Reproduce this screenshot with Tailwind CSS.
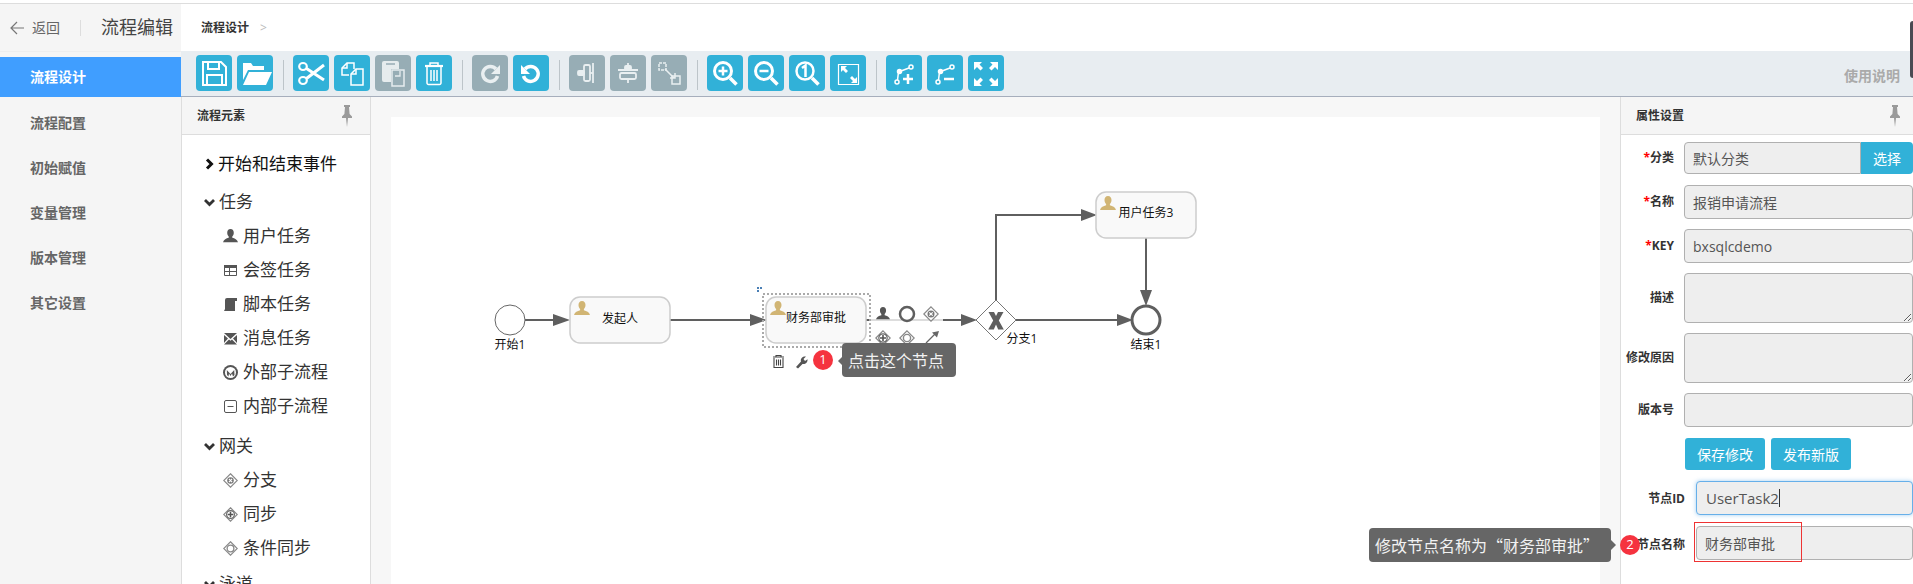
<!DOCTYPE html>
<html lang="zh">
<head>
<meta charset="utf-8">
<title>流程编辑</title>
<script src="https://cdn.jsdelivr.net/npm/@tailwindcss/browser@4"></script>
</head>
<body class="relative w-[1913px] h-[584px] overflow-hidden bg-white text-[#333] font-['Open_Sans','Noto_Sans_CJK_SC',sans-serif]">
<svg class="absolute w-0 h-0">
  <defs>
    <symbol id="pin" viewBox="0 0 12 22"><path fill="#9a9a9a" d="M3 0h6v2H8l.6 7L11 11.500V13H7l-1 9-1-9H1v-1.500L3.400 9 4 2H3z"/></symbol>
    <symbol id="person" viewBox="0 0 16 16"><path d="M8 0c2.300 0 3.500 1.700 3.500 4 0 1.700-.7 3.200-1.600 4v1.300c2.600.8 5.300 1.800 6.100 4.700H0c.8-2.900 3.500-3.900 6.100-4.700V8c-.9-.8-1.600-2.300-1.600-4C4.500 1.700 5.700 0 8 0z"/></symbol>
    <symbol id="dx" viewBox="0 0 16 16"><path d="M8 .8 15.200 8 8 15.200.8 8z" fill="#fff" stroke="#888" stroke-width="1.200"/><circle cx="8" cy="8" r="3.500" fill="#777"/><path d="m6.300 6.300 3.400 3.400m0-3.400-3.400 3.400" stroke="#fff" stroke-width="1.200"/></symbol>
    <symbol id="dp" viewBox="0 0 16 16"><path d="M8 .8 15.200 8 8 15.200.8 8z" fill="#fff" stroke="#888" stroke-width="1.200"/><circle cx="8" cy="8" r="4.200" fill="#fff" stroke="#666" stroke-width="1.200"/><path d="M8 5v6M5 8h6" stroke="#555" stroke-width="1.600"/></symbol>
    <symbol id="dr" viewBox="0 0 16 16"><path d="M8 .8 15.200 8 8 15.200.8 8z" fill="#fff" stroke="#888" stroke-width="1.200"/><circle cx="8" cy="8" r="3.600" fill="#fff" stroke="#888" stroke-width="1.400"/></symbol>
  </defs>
</svg>

<div class="h-[3px] bg-white"></div>
<div class="h-px bg-[#ddd]"></div>

<div class="flex h-[580px]">
  <!-- sidebar -->
  <aside class="w-[181px] shrink-0 bg-[#f5f5f5] flex flex-col">
    <div class="h-[48px] shrink-0 flex items-center border-b border-[#eee] pl-[10px]">
      <svg class="w-[15px] h-[14px]" viewBox="0 0 15 14" fill="none" stroke="#777" stroke-width="1.200"><path d="M14 7H1.500M7 1 1 7l6 6"/></svg>
      <span class="ml-[7px] text-[14px] text-[#666]">返回</span>
      <span class="ml-[20px] w-px h-[16px] bg-[#ddd]"></span>
      <span class="ml-[20px] text-[18px] text-[#444] whitespace-nowrap">流程编辑</span>
    </div>
    <nav class="mt-[5px] flex flex-col gap-[5px] text-[14px] font-bold text-[#666]">
      <a class="h-[40px] flex items-center pl-[30px] pb-[2px] bg-[#409eff] text-white">流程设计</a>
      <a class="h-[40px] flex items-center pl-[30px]">流程配置</a>
      <a class="h-[40px] flex items-center pl-[30px]">初始赋值</a>
      <a class="h-[40px] flex items-center pl-[30px]">变量管理</a>
      <a class="h-[40px] flex items-center pl-[30px]">版本管理</a>
      <a class="h-[40px] flex items-center pl-[30px]">其它设置</a>
    </nav>
  </aside>

  <div class="flex-1 min-w-0 flex flex-col">
    <!-- breadcrumb -->
    <div class="h-[47px] shrink-0 flex items-center pl-[20px] bg-white">
      <span class="text-[12px] font-bold text-[#333]">流程设计</span>
      <span class="ml-[11px] text-[12px] text-[#bbb]">&gt;</span>
    </div>

    <!-- toolbar -->
    <div class="h-[46px] shrink-0 bg-[#e8edf1] border-b border-[#a6aebc] flex items-start gap-[5px] pt-[4px] pl-[15px]">
      <button class="w-[36px] h-[36px] rounded-[4px] bg-[#31b1d8]"><svg viewBox="0 0 36 36" fill="none" stroke="#fff" stroke-width="2"><path d="M7 7h18l5 5v18H7zM12 7v7h11V7M11 30v-10h15v10"/></svg></button>
      <button class="w-[36px] h-[36px] rounded-[4px] bg-[#31b1d8]"><svg viewBox="0 0 36 36" fill="#fff"><path d="M6 10V8h8l2 3h11v4H11L6 25z"/><path d="M12 17h23l-6 13H6z"/></svg></button>
      <span class="ml-[5px] mr-[4px] mt-[5px] w-px h-[30px] bg-[#bcc4c9]"></span>
      <button class="w-[36px] h-[36px] rounded-[4px] bg-[#31b1d8]"><svg viewBox="0 0 36 36" fill="none" stroke="#fff" stroke-width="2.200"><ellipse cx="10" cy="11.500" rx="3.800" ry="3.500"/><ellipse cx="10" cy="25.500" rx="3.800" ry="3.500"/><path d="M13.500 13.500 31 25M13.500 23.500 31 10" stroke-width="3"/></svg></button>
      <button class="w-[36px] h-[36px] rounded-[4px] bg-[#31b1d8]"><svg viewBox="0 0 36 36" fill="none" stroke="#fff" stroke-width="1.500"><path d="M15 20H8v-7l5-5h7v6"/><path d="M13 8v5H8"/><path d="M17 19l5-5h7v16H17z"/><path d="M22 14v5h-5"/></svg></button>
      <button class="w-[36px] h-[36px] rounded-[4px] bg-[#97adb5]"><svg viewBox="0 0 36 36" fill="none"><path fill="#e6ecee" d="M7 8a2 2 0 0 1 2-2h13a2 2 0 0 1 2 2v6h-8v13H9a2 2 0 0 1-2-2z"/><path stroke="#e6ecee" stroke-width="1.500" d="M17 15h12v16H17z"/><path stroke="#97adb5" stroke-width="1.500" d="M11 9h9"/><path stroke="#e6ecee" stroke-width="1.300" d="M25 16v5h-5"/></svg></button>
      <button class="w-[36px] h-[36px] rounded-[4px] bg-[#31b1d8]"><svg viewBox="0 0 36 36" fill="none" stroke="#fff" stroke-width="1.500"><path d="M9 11h18" stroke-width="2.200"/><path d="M14 11V8h8v3M11 12v16a1.500 1.500 0 0 0 1.500 1.500h11A1.500 1.500 0 0 0 25 28V12"/><path d="M15 15v11M18 15v11M21 15v11"/></svg></button>
      <span class="ml-[5px] mr-[4px] mt-[5px] w-px h-[30px] bg-[#bcc4c9]"></span>
      <button class="w-[36px] h-[36px] rounded-[4px] bg-[#97adb5]"><svg viewBox="0 0 36 36" fill="none"><path stroke="#e9eff1" stroke-width="3.500" d="M24 14a7.500 7.500 0 1 0 1.500 7"/><path fill="#e9eff1" d="M28 10v9h-9z"/></svg></button>
      <button class="w-[36px] h-[36px] rounded-[4px] bg-[#31b1d8]"><svg viewBox="0 0 36 36" fill="none"><path stroke="#fff" stroke-width="3.500" d="M12 14a7.500 7.500 0 1 1-1.500 7"/><path fill="#fff" d="M8 10v9h9z"/></svg></button>
      <span class="ml-[5px] mr-[4px] mt-[5px] w-px h-[30px] bg-[#bcc4c9]"></span>
      <button class="w-[36px] h-[36px] rounded-[4px] bg-[#97adb5]"><svg viewBox="0 0 36 36" fill="none" stroke="#e9eff1" stroke-width="1.800"><rect x="15" y="10" width="6" height="16" rx="1.500"/><path d="M24 8v20"/><rect x="9" y="16" width="6" height="4" rx="1" fill="#e9eff1"/><path d="M21 18h3"/></svg></button>
      <button class="w-[36px] h-[36px] rounded-[4px] bg-[#97adb5]"><svg viewBox="0 0 36 36" fill="none" stroke="#e9eff1" stroke-width="1.800"><rect x="10" y="18" width="16" height="6" rx="1.500"/><rect x="15" y="11" width="6" height="4" rx="1" fill="#e9eff1"/><path d="M8 15h20M18 8v3M18 24v4"/></svg></button>
      <button class="w-[36px] h-[36px] rounded-[4px] bg-[#97adb5]"><svg viewBox="0 0 36 36" fill="none" stroke="#e9eff1" stroke-width="1.500"><path d="M8 8h7v7H8z" stroke-dasharray="3 1"/><path d="M21 21h8v8h-8z"/><path d="M14 14l9 9M24 18v5h-5"/></svg></button>
      <span class="ml-[5px] mr-[4px] mt-[5px] w-px h-[30px] bg-[#bcc4c9]"></span>
      <button class="w-[36px] h-[36px] rounded-[4px] bg-[#31b1d8]"><svg viewBox="0 0 36 36" fill="none" stroke="#fff"><circle cx="16" cy="16" r="8.500" stroke-width="3"/><path d="M23 23l6.500 6.500" stroke-width="3.500"/><path d="M16 11.500v9M11.500 16h9" stroke-width="2.500"/></svg></button>
      <button class="w-[36px] h-[36px] rounded-[4px] bg-[#31b1d8]"><svg viewBox="0 0 36 36" fill="none" stroke="#fff"><circle cx="16" cy="16" r="8.500" stroke-width="3"/><path d="M23 23l6.500 6.500" stroke-width="3.500"/><path d="M11.500 16h9" stroke-width="2.500"/></svg></button>
      <button class="w-[36px] h-[36px] rounded-[4px] bg-[#31b1d8]"><svg viewBox="0 0 36 36" fill="none" stroke="#fff"><circle cx="16" cy="16" r="8.500" stroke-width="2.500"/><path d="M23 23l6.500 6.500" stroke-width="3.500"/><path d="M13 13l3.500-2.500V22" stroke-width="2.500"/></svg></button>
      <button class="w-[36px] h-[36px] rounded-[4px] bg-[#31b1d8]"><svg viewBox="0 0 36 36" fill="none"><path stroke="#fff" stroke-width="1.200" d="M8.500 9.500h20v20h-20z"/><path fill="#fff" d="M11 11h6l-2 2 3 3-2 2-3-3-2 2zM27 28h-6l2-2-3-3 2-2 3 3 2-2z"/></svg></button>
      <span class="ml-[5px] mr-[4px] mt-[5px] w-px h-[30px] bg-[#bcc4c9]"></span>
      <button class="w-[36px] h-[36px] rounded-[4px] bg-[#31b1d8]"><svg viewBox="0 0 36 36" fill="none" stroke="#fff" stroke-width="1.500"><circle cx="25" cy="12" r="2"/><circle cx="11" cy="27" r="2"/><path d="M23 13l-8 3q-3 1-3 5l-.5 4"/><circle cx="13.500" cy="16.500" r="2" fill="#fff"/><path d="M17 24h10M22 19v10" stroke-width="2.500"/></svg></button>
      <button class="w-[36px] h-[36px] rounded-[4px] bg-[#31b1d8]"><svg viewBox="0 0 36 36" fill="none" stroke="#fff" stroke-width="1.500"><circle cx="25" cy="12" r="2"/><circle cx="11" cy="27" r="2"/><path d="M23 13l-8 3q-3 1-3 5l-.5 4"/><circle cx="13.500" cy="16.500" r="2" fill="#fff"/><path d="M17 24h10" stroke-width="2.500"/></svg></button>
      <button class="w-[36px] h-[36px] rounded-[4px] bg-[#31b1d8]"><svg viewBox="0 0 36 36" fill="#fff"><path d="M6 7h8l-2.500 2.500 3.500 3.500-2.500 2.500L9 12l-3 3zM30 7v8l-3-3-3.500 3.500L21 13l3.500-3.500L22 7zM6 31v-8l3 3 3.500-3.500L15 25l-3.500 3.500L14 31zM30 31h-8l2.500-2.500L21 25l2.500-2.500L27 26l3-3z"/></svg></button>
      <span class="ml-auto mr-[13px] self-center text-[14px] font-bold text-[#aaa] whitespace-nowrap">使用说明</span>
    </div>

    <!-- work area -->
    <div class="flex-1 min-h-0 flex">
      <!-- elements panel -->
      <section class="w-[190px] shrink-0 border-x border-[#ddd] bg-white flex flex-col">
        <div class="h-[38px] shrink-0 bg-[#f5f5f5] border-b border-[#ddd] flex items-center justify-between pt-[1px] pl-[15px] pr-[17px]">
          <span class="text-[12px] font-bold text-[#333]">流程元素</span>
          <svg class="w-[12px] h-[22px]"><use href="#pin"/></svg>
        </div>
        <div class="pt-[12px] text-[17px] text-[#333]">
          <div class="h-[34px] flex items-center pl-[23px] text-[#111]">
            <svg class="w-[9px] h-[12px] mr-[4px]" viewBox="0 0 9 12" fill="none" stroke="#111" stroke-width="3"><path d="m2 1.500 4.500 4.500L2 10.500"/></svg>开始和结束事件
          </div>
          <div class="mt-[4px] h-[34px] flex items-center pl-[22px]">
            <svg class="w-[11px] h-[9px] mr-[4px]" viewBox="0 0 11 9" fill="none" stroke="#333" stroke-width="2.800"><path d="m1 2 4.500 4.500L10 2"/></svg>任务
          </div>
          <div class="h-[34px] flex items-center gap-[5px] pl-[41px]"><svg class="w-[15px] h-[15px] fill-[#555]"><use href="#person"/></svg>用户任务</div>
          <div class="h-[34px] flex items-center gap-[5px] pl-[41px]"><svg class="w-[15px] h-[15px]" viewBox="0 0 15 15" fill="none"><path fill="#555" d="M1 2h13v3H1z"/><path stroke="#555" d="M1.500 2.500h12v10h-12zM1.500 8.500h12M6.500 5v8"/></svg>会签任务</div>
          <div class="h-[34px] flex items-center gap-[5px] pl-[41px]"><svg class="w-[15px] h-[15px]" viewBox="0 0 15 15"><path fill="#555" d="M4 1h10v3h-2v10H1l1-2V3q0-2 2-2z"/></svg>脚本任务</div>
          <div class="h-[34px] flex items-center gap-[5px] pl-[41px]"><svg class="w-[15px] h-[15px]" viewBox="0 0 15 15"><path fill="#555" d="M1 2h13L7.500 8zM1 4l4 3.500L1 12zM14 4v8l-4-4.500zM6 8.500l1.500 1.300L9 8.500l5 5H1z"/></svg>消息任务</div>
          <div class="h-[34px] flex items-center gap-[5px] pl-[41px]"><svg class="w-[15px] h-[15px]" viewBox="0 0 15 15"><circle cx="7.500" cy="7.500" r="7.500" fill="#555"/><circle cx="7.500" cy="7.500" r="5.500" fill="#fff"/><path d="M3.800 5 7.500 9l3.700-4 .3 5-1.500 1.500L9 8.500 7.500 11 6 8.500l-.5 3L4 10z" fill="#555"/></svg>外部子流程</div>
          <div class="h-[34px] flex items-center gap-[5px] pl-[41px]"><svg class="w-[15px] h-[15px]" viewBox="0 0 15 15" fill="none" stroke="#555"><rect x="1.500" y="1.500" width="12" height="12" rx="1.500"/><path d="M4.500 7.500h6"/></svg>内部子流程</div>
          <div class="mt-[6px] h-[34px] flex items-center pl-[22px]">
            <svg class="w-[11px] h-[9px] mr-[4px]" viewBox="0 0 11 9" fill="none" stroke="#333" stroke-width="2.800"><path d="m1 2 4.500 4.500L10 2"/></svg>网关
          </div>
          <div class="h-[34px] flex items-center gap-[5px] pl-[41px]"><svg class="w-[15px] h-[15px]"><use href="#dx"/></svg>分支</div>
          <div class="h-[34px] flex items-center gap-[5px] pl-[41px]"><svg class="w-[15px] h-[15px]"><use href="#dp"/></svg>同步</div>
          <div class="h-[34px] flex items-center gap-[5px] pl-[41px]"><svg class="w-[15px] h-[15px]"><use href="#dr"/></svg>条件同步</div>
          <div class="mt-[2px] h-[34px] flex items-center pl-[22px]">
            <svg class="w-[11px] h-[9px] mr-[4px]" viewBox="0 0 11 9" fill="none" stroke="#333" stroke-width="2.800"><path d="m1 2 4.500 4.500L10 2"/></svg>泳道
          </div>
        </div>
      </section>

      <!-- canvas -->
      <main class="flex-1 min-w-0 bg-[#f7f7f7] pt-[20px] px-[20px]">
        <div class="relative h-full bg-white">
          <svg class="absolute inset-0 w-[1209px] h-[467px] font-['Open_Sans','Noto_Sans_CJK_SC',sans-serif]" viewBox="391 117 1209 467" font-size="12" fill="#111">
            <!-- flows -->
            <g fill="none" stroke="#5f5f5f" stroke-width="2">
              <path d="M525 320h29M670 320h81M866 320h5M943 320h19M1016 320h102M996 300V215h86M1146 238v54"/>
              <path d="M871 320h72" stroke="#ddd"/>
            </g>
            <g fill="#5f5f5f">
              <path d="m570 320-17-6v12zM767 320l-17-6v12zM977 320l-16-6v12zM1133 320l-16-6v12zM1097 215l-16-6v12zM1146 306l-6-16h12z"/>
            </g>
            <!-- start -->
            <circle cx="510" cy="320" r="15" fill="#fff" stroke="#666" stroke-width="1"/>
            <text x="510" y="349" text-anchor="middle">开始1</text>
            <!-- tasks -->
            <g fill="#f9f9f9" stroke="#cdcdcd" stroke-width="1.500">
              <rect x="570" y="297" width="100" height="46" rx="10"/>
              <rect x="766" y="297" width="100" height="46" rx="10"/>
              <rect x="1096" y="192" width="100" height="46" rx="10"/>
            </g>
            <g fill="#d1b574">
              <svg x="574" y="301" width="16" height="16"><use href="#person"/></svg>
              <svg x="770" y="301" width="16" height="16"><use href="#person"/></svg>
              <svg x="1100" y="196" width="16" height="16"><use href="#person"/></svg>
            </g>
            <text x="620" y="323" text-anchor="middle">发起人</text>
            <text x="816" y="322" text-anchor="middle">财务部审批</text>
            <text x="1146" y="217" text-anchor="middle">用户任务3</text>
            <!-- selection -->
            <rect x="763" y="294" width="107" height="53" fill="none" stroke="#aaa" stroke-width="2" stroke-dasharray="2 2"/>
            <path d="M757 287h2v2h-2zM760 287h2v2h-2zM757 290h2v2h-2z" fill="#4a7fb5"/>
            <!-- context pad -->
            <svg x="876" y="307" width="14" height="14" fill="#555"><use href="#person"/></svg>
            <circle cx="907" cy="314" r="7" fill="#fff" stroke="#5f5f5f" stroke-width="2.500"/>
            <svg x="923" y="306" width="16" height="16"><use href="#dx"/></svg>
            <svg x="875" y="330" width="16" height="16"><use href="#dp"/></svg>
            <svg x="899" y="330" width="16" height="16"><use href="#dr"/></svg>
            <path d="m926 343 10-10" stroke="#666" stroke-width="1.200"/><path d="m939 331-7 1.500 5 5z" fill="#666"/>
            <!-- trash + wrench -->
            <g fill="none" stroke="#444" stroke-width="1.100">
              <path d="M773 357h11M776 357v-1.500h5v1.500M774 358v9.500h9V358M776.500 359.500v6M778.500 359.500v6M780.500 359.500v6"/>
            </g>
            <path d="M796 367l5-5.500c-.8-2.500 1-5.500 5-5l-2.500 2.500 1.500 2 2.500-1.800c.4 3.400-2.500 5.500-5 4.700l-4.500 4.600z" fill="#555"/>
            <!-- gateway -->
            <path d="m996 300 20 20-20 20-20-20z" fill="#fff" stroke="#777" stroke-width="1"/>
            <path d="M988.500 312h5.500l2 4 2-4h5.500l-4.700 8.500 5 9h-5.600l-2.200-5-2.200 5h-5.600l5-9z" fill="#5f5f5f"/>
            <text x="1022" y="343" text-anchor="middle">分支1</text>
            <!-- end -->
            <circle cx="1146" cy="320" r="14" fill="#fff" stroke="#5f5f5f" stroke-width="3"/>
            <text x="1146" y="349" text-anchor="middle">结束1</text>
          </svg>

          <!-- step 1 overlay -->
          <span class="absolute left-[422px] top-[233px] w-[20px] h-[20px] rounded-full bg-[#f5333f] text-white text-[13px] flex items-center justify-center">1</span>
          <span class="absolute left-[447px] top-[239px] w-0 h-0 border-y-[5px] border-y-transparent border-r-[5px] border-r-[#666]"></span>
          <div class="absolute left-[451px] top-[226px] w-[114px] h-[34px] rounded-[4px] bg-[#666] text-[#f2f2f2] text-[16px] flex items-center pl-[6px] pt-[1px] whitespace-nowrap">点击这个节点</div>
        </div>
      </main>

      <!-- properties -->
      <section class="w-[293px] shrink-0 border-l border-[#ddd] bg-white flex flex-col">
        <div class="h-[38px] shrink-0 bg-[#f5f5f5] border-b border-[#ddd] flex items-center justify-between pt-[1px] pl-[15px] pr-[12px]">
          <span class="text-[12px] font-bold text-[#333]">属性设置</span>
          <svg class="w-[12px] h-[22px]"><use href="#pin"/></svg>
        </div>
        <div class="pt-[7px] text-[12px] font-bold text-[#333]">
          <div class="flex items-center h-[32px]">
            <label class="w-[53px] text-right"><span class="text-[#f00]">*</span>分类</label>
            <input readonly value="默认分类" class="ml-[10px] flex-1 min-w-0 h-full px-[8px] text-[14px] font-normal text-[#555] bg-[#eee] border border-[#b0b0b0] rounded-l-[4px]">
            <button class="w-[52px] h-full bg-[#31b1d8] text-white text-[14px] font-normal rounded-r-[4px]">选择</button>
          </div>
          <div class="mt-[11px] flex items-center h-[34px]">
            <label class="w-[53px] text-right"><span class="text-[#f00]">*</span>名称</label>
            <input readonly value="报销申请流程" class="ml-[10px] flex-1 min-w-0 h-full px-[8px] text-[14px] font-normal text-[#555] bg-[#eee] border border-[#b0b0b0] rounded-[4px]">
          </div>
          <div class="mt-[10px] flex items-center h-[34px]">
            <label class="w-[53px] text-right"><span class="text-[#f00]">*</span>KEY</label>
            <input readonly value="bxsqlcdemo" class="ml-[10px] flex-1 min-w-0 h-full px-[8px] text-[14px] font-normal text-[#555] bg-[#eee] border border-[#b0b0b0] rounded-[4px]">
          </div>
          <div class="mt-[10px] flex items-center h-[50px]">
            <label class="w-[53px] text-right">描述</label>
            <textarea readonly class="ml-[10px] flex-1 min-w-0 h-full px-[8px] bg-[#eee] border border-[#b0b0b0] rounded-[4px]"></textarea>
          </div>
          <div class="mt-[10px] flex items-center h-[50px]">
            <label class="w-[53px] text-right">修改原因</label>
            <textarea readonly class="ml-[10px] flex-1 min-w-0 h-full px-[8px] bg-[#eee] border border-[#b0b0b0] rounded-[4px]"></textarea>
          </div>
          <div class="mt-[10px] flex items-center h-[34px]">
            <label class="w-[53px] text-right">版本号</label>
            <input readonly class="ml-[10px] flex-1 min-w-0 h-full px-[8px] bg-[#eee] border border-[#b0b0b0] rounded-[4px]">
          </div>
          <div class="mt-[11px] flex gap-[6px] h-[32px] pl-[64px] text-[14px] font-normal text-white">
            <button class="w-[80px] h-full bg-[#31b1d8] rounded-[3px]">保存修改</button>
            <button class="w-[80px] h-full bg-[#31b1d8] rounded-[3px]">发布新版</button>
          </div>
          <div class="mt-[11px] flex items-center h-[34px]">
            <label class="w-[64px] text-right pt-[2px]">节点ID</label>
            <div class="ml-[11px] flex-1 min-w-0 h-full flex items-center px-[9px] text-[15px] font-normal text-[#555] bg-[#eee] border border-[#66afe9] rounded-[4px] shadow-[0_0_4px_rgba(102,175,233,0.6)]">UserTask2<span class="w-px h-[18px] bg-[#333]"></span></div>
          </div>
          <div class="mt-[11px] flex items-center h-[34px]">
            <label class="w-[64px] text-right whitespace-nowrap pt-[3px]">节点名称</label>
            <input readonly value="财务部审批" class="ml-[11px] flex-1 min-w-0 h-full px-[8px] text-[14px] font-normal text-[#555] bg-[#eee] border border-[#b0b0b0] rounded-[4px]">
          </div>
        </div>
      </section>
    </div>
  </div>
</div>

<!-- overlays on the page -->
<div class="absolute left-[1910px] top-[21px] w-[3px] h-[57px] bg-[#4a4a52] rounded-l-[3px]"></div>
<div class="absolute left-[1694px] top-[522px] w-[108px] h-[40px] border border-[#ee3333]"></div>
<div class="absolute left-[1369px] top-[528px] w-[242px] h-[34px] rounded-[4px] bg-[#666] text-[#f2f2f2] text-[16px] font-['Noto_Sans_CJK_SC',sans-serif] flex items-center pl-[6px] whitespace-nowrap">修改节点名称为“财务部审批”</div>
<span class="absolute left-[1611px] top-[540px] w-0 h-0 border-y-[5px] border-y-transparent border-l-[5px] border-l-[#666]"></span>
<span class="absolute left-[1620px] top-[535px] w-[20px] h-[20px] rounded-full bg-[#f5333f] text-white text-[13px] flex items-center justify-center">2</span>
</body>
</html>
